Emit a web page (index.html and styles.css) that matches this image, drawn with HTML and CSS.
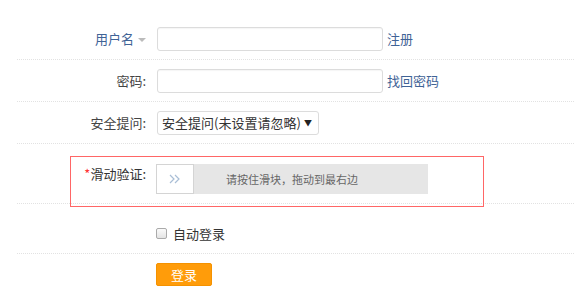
FILE: index.html
```html
<!DOCTYPE html>
<html lang="zh-CN">
<head>
    <meta charset="UTF-8">
    <title>登录</title>
    <link rel="stylesheet" href="styles.css">
</head>
<body>
    <form class="login-form">
        <div class="row">
            <label class="label label-link">用户名 <span class="caret"></span></label>
            <input type="text" class="text-input">
            <a class="side-link" href="#">注册</a>
        </div>
        <div class="row">
            <label class="label">密码:</label>
            <input type="password" class="text-input">
            <a class="side-link" href="#">找回密码</a>
        </div>
        <div class="row">
            <label class="label">安全提问:</label>
            <div class="select-box">
                <span>安全提问(未设置请忽略)</span>
                <span class="select-arrow">▼</span>
            </div>
        </div>
        <div class="row row-verify">
            <div class="verify-box">
                <label class="label verify-label"><span class="star">*</span>滑动验证:</label>
                <div class="slider">
                    <div class="slider-handle">
                        <svg width="12" height="10" viewBox="0 0 12 10">
                            <path d="M1 1l4 4-4 4M6 1l4 4-4 4" fill="none" stroke="#a9bed6" stroke-width="1.2"/>
                        </svg>
                    </div>
                    <span class="slider-text">请按住滑块，拖动到最右边</span>
                </div>
            </div>
        </div>
        <div class="row row-check">
            <label class="check"><span class="check-box"></span>自动登录</label>
        </div>
        <div class="row row-submit">
            <button type="button" class="btn-login">登录</button>
        </div>
    </form>
</body>
</html>
```

FILE: styles.css
```css
body {
    margin: 0;
    padding-top: 18px;
    font-family: "Noto Sans CJK SC", "Liberation Sans", sans-serif;
    font-size: 13px;
    color: #444;
    background: #fff;
}

.login-form {
    margin-left: 17px;
}

.row {
    display: flex;
    align-items: center;
    padding: 9px 0;
    border-bottom: 1px dotted #e2e2e2;
    height: 23px;
}

.label {
    width: 129px;
    text-align: right;
    margin-right: 11px;
    line-height: 20px;
    white-space: nowrap;
}

.label-link {
    color: #3f6396;
}

.caret {
    display: inline-block;
    width: 0;
    height: 0;
    border-left: 4px solid transparent;
    border-right: 4px solid transparent;
    border-top: 4px solid #bbb;
    vertical-align: middle;
    margin-left: 1px;
}

.text-input {
    box-sizing: border-box;
    width: 226px;
    height: 24px;
    border: 1px solid #dcdcdc;
    border-radius: 3px;
    box-shadow: inset 0 1px 1px rgba(0, 0, 0, 0.04);
    margin: 0;
    padding: 0 4px;
}

.side-link {
    margin-left: 4px;
    color: #3f6396;
    text-decoration: none;
}

.select-box {
    box-sizing: border-box;
    width: 162px;
    height: 24px;
    border: 1px solid #dcdcdc;
    border-radius: 3px;
    display: flex;
    align-items: center;
    justify-content: space-between;
    padding: 0 6px 0 4px;
    color: #333;
    white-space: nowrap;
}

.select-arrow {
    font-size: 8px;
    color: #222;
}

.row-verify {
    height: auto;
    padding: 12px 0 0;
    align-items: flex-start;
}

.verify-box {
    display: flex;
    align-items: flex-start;
    margin-left: 53px;
    margin-bottom: -4px;
    width: 412px;
    padding: 7px 0 12px;
    border: 1px solid #f66;
    position: relative;
}

.verify-label {
    width: 75px;
    margin-right: 10px;
    color: #333;
}

.star {
    color: #f33;
}

.slider {
    position: relative;
    width: 272px;
    height: 30px;
    background: #e6e6e6;
    display: flex;
    align-items: center;
    justify-content: center;
}

.slider-handle {
    position: absolute;
    left: 0;
    top: 0;
    box-sizing: border-box;
    width: 38px;
    height: 30px;
    background: #fff;
    border: 1px solid #d4d4d4;
    display: flex;
    align-items: center;
    justify-content: center;
}

.slider-text {
    font-size: 11px;
    color: #666;
}

.row-check {
    height: 22px;
    padding: 18px 0 9px;
}

.check {
    display: flex;
    align-items: center;
    margin-left: 139px;
    color: #333;
}

.check-box {
    box-sizing: border-box;
    width: 11px;
    height: 11px;
    border: 1px solid #aaa;
    border-radius: 2px;
    background: linear-gradient(#fafafa, #e4e4e4);
    margin-right: 6px;
}

.row-submit {
    border-bottom: none;
    padding-top: 9px;
}

.btn-login {
    margin-left: 139px;
    width: 56px;
    height: 23px;
    background: #ff9c0a;
    color: #fff;
    border: 1px solid #f59200;
    border-radius: 2px;
    font-family: "Noto Sans CJK SC", sans-serif;
    font-size: 13px;
    padding: 0;
    cursor: pointer;
}
```
